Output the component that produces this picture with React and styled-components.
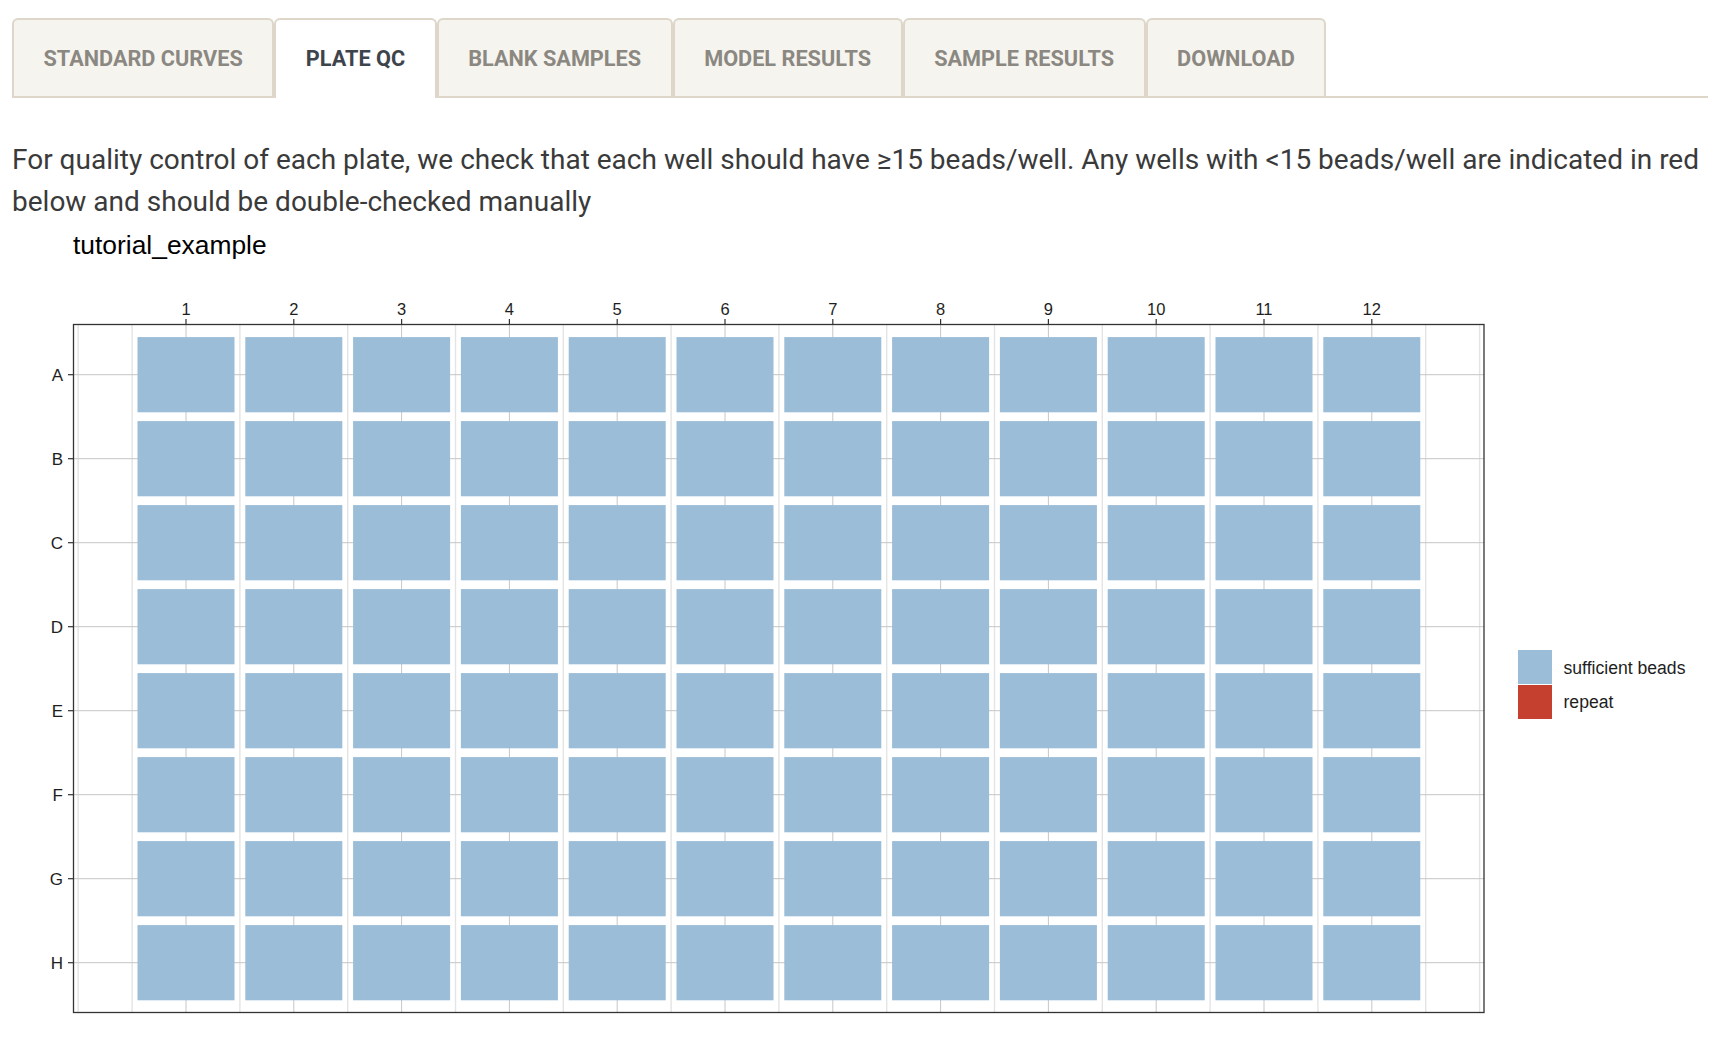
import React from "react";
import styled, { createGlobalStyle } from "styled-components";

const GlobalStyle = createGlobalStyle`
  html, body { margin: 0; padding: 0; background: #ffffff; }
  body { font-family: Roboto, "Noto Sans", "Liberation Sans", sans-serif; }
`;

const Page = styled.div`
  padding: 0 22px 0 12px;
`;

const TabBar = styled.nav`
  display: flex;
  align-items: flex-end;
  padding-top: 18px;
  border-bottom: 2px solid #ddd6c9;
`;

const Tab = styled.div`
  box-sizing: border-box;
  height: ${(p) => (p.$active ? "80px" : "78px")};
  margin-right: 0;
  margin-bottom: ${(p) => (p.$active ? "-2px" : "0")};
  padding: 0 29.5px ${(p) => (p.$active ? "2px" : "0")};
  display: flex;
  align-items: center;
  border: 2px solid #ddd6c9;
  border-bottom: none;
  border-radius: 6px 6px 0 0;
  background: ${(p) => (p.$active ? "#ffffff" : "#f6f4ef")};
  color: ${(p) => (p.$active ? "#3e444c" : "#8b8882")};
  font-family: Roboto, "Liberation Sans", sans-serif;
  font-weight: 700;
  font-size: 21.7px;
  text-transform: uppercase;
  white-space: nowrap;
`;

const Intro = styled.p`
  margin: 41px 0 0;
  font-family: Roboto, "Liberation Sans", sans-serif;
  font-size: 28px;
  line-height: 42px;
  color: #3a3a3a;
`;

const Figure = styled.figure`
  margin: 0;
  display: block;
`;

const PlotSvg = styled.svg`
  display: block;
  width: 1700px;
  height: 817px;
  font-family: "Liberation Sans", Arial, sans-serif;
`;

const tabs = [
  "Standard Curves",
  "Plate QC",
  "Blank Samples",
  "Model Results",
  "Sample Results",
  "Download",
];

const rows = ["A", "B", "C", "D", "E", "F", "G", "H"];
const cols = Array.from({ length: 12 }, (_, i) => i + 1);

const X0 = 78.2;
const DX = 107.8;
const xOf = (v) => X0 + v * DX;
const Y0 = 374.7;
const DY = 84;
const yOf = (j) => Y0 + j * DY;

const PANEL = { x0: 73.5, y0: 324.5, x1: 1484, y1: 1012.5 };

const BLUE = "#9bbdd7";
const RED = "#c5402f";

function PlatePlot() {
  const minorVals = [0, ...cols.map((c) => c - 0.5), 12.5, 13];
  return (
    <PlotSvg viewBox="12 223 1700 817" xmlns="http://www.w3.org/2000/svg">
      <text x="73" y="254" fontSize="26.4" fill="#000">
        tutorial_example
      </text>

      <rect
        x={PANEL.x0}
        y={PANEL.y0}
        width={PANEL.x1 - PANEL.x0}
        height={PANEL.y1 - PANEL.y0}
        fill="#fff"
      />
      {minorVals.map((v) => (
        <line
          key={"mn" + v}
          x1={xOf(v)}
          x2={xOf(v)}
          y1={PANEL.y0}
          y2={PANEL.y1}
          stroke="#e4e4e4"
          strokeWidth="1.4"
        />
      ))}
      {cols.map((c) => (
        <line
          key={"mj" + c}
          x1={xOf(c)}
          x2={xOf(c)}
          y1={PANEL.y0}
          y2={PANEL.y1}
          stroke="#c6c6c6"
          strokeWidth="1"
        />
      ))}
      {rows.map((r, j) => (
        <line
          key={"hr" + r}
          x1={PANEL.x0}
          x2={PANEL.x1}
          y1={yOf(j)}
          y2={yOf(j)}
          stroke="#c6c6c6"
          strokeWidth="1"
        />
      ))}

      {rows.map((r, j) =>
        cols.map((c) => (
          <rect
            key={r + c}
            x={xOf(c) - 48.5}
            y={yOf(j) - 37.6}
            width="97"
            height="75.2"
            fill={BLUE}
          />
        ))
      )}

      <rect
        x={PANEL.x0}
        y={PANEL.y0}
        width={PANEL.x1 - PANEL.x0}
        height={PANEL.y1 - PANEL.y0}
        fill="none"
        stroke="#333"
        strokeWidth="1.3"
      />

      {cols.map((c) => (
        <g key={"ct" + c}>
          <line
            x1={xOf(c)}
            x2={xOf(c)}
            y1={PANEL.y0 - 5.5}
            y2={PANEL.y0}
            stroke="#333"
            strokeWidth="1.2"
          />
          <text
            x={xOf(c)}
            y="314.8"
            fontSize="16.5"
            textAnchor="middle"
            fill="#1e1e1e"
          >
            {c}
          </text>
        </g>
      ))}

      {rows.map((r, j) => (
        <g key={"rt" + r}>
          <line
            x1={PANEL.x0 - 5.5}
            x2={PANEL.x0}
            y1={yOf(j)}
            y2={yOf(j)}
            stroke="#333"
            strokeWidth="1.2"
          />
          <text
            x="63"
            y={yOf(j) + 6.2}
            fontSize="17"
            textAnchor="end"
            fill="#1e1e1e"
          >
            {r}
          </text>
        </g>
      ))}

      <rect x="1518" y="650" width="34" height="34" fill={BLUE} />
      <rect x="1518" y="685" width="34" height="34" fill={RED} />
      <text x="1563.5" y="673.5" fontSize="17.6" fill="#1e1e1e">
        sufficient beads
      </text>
      <text x="1563.5" y="707.5" fontSize="17.6" fill="#1e1e1e">
        repeat
      </text>
    </PlotSvg>
  );
}

export default function App() {
  return (
    <>
      <GlobalStyle />
      <Page>
        <TabBar>
          {tabs.map((t) => (
            <Tab key={t} $active={t === "Plate QC"}>
              {t}
            </Tab>
          ))}
        </TabBar>
        <Intro>
          For quality control of each plate, we check that each well should
          have ≥15 beads/well. Any wells with &lt;15 beads/well are indicated in
          red below and should be double-checked manually
        </Intro>
        <Figure>
          <PlatePlot />
        </Figure>
      </Page>
    </>
  );
}
